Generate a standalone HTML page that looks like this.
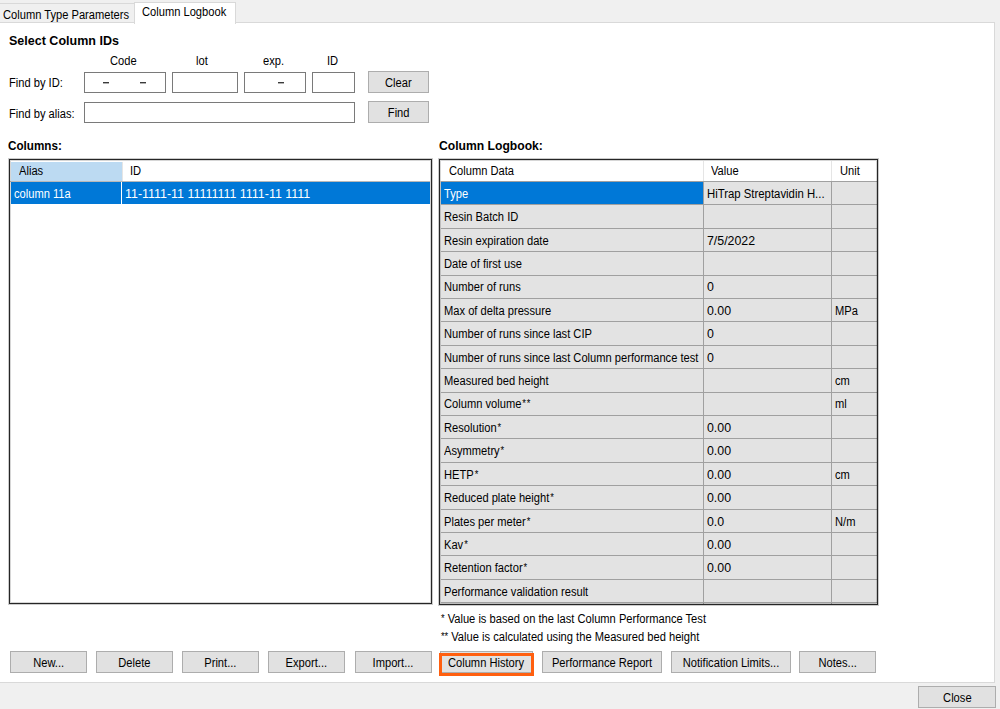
<!DOCTYPE html>
<html><head><meta charset="utf-8">
<style>
*{box-sizing:border-box;margin:0;padding:0}
html,body{width:1000px;height:709px;overflow:hidden;background:#f0f0f0;font-family:"Liberation Sans",sans-serif;font-size:11px;color:#000}
.a{position:absolute}
.t{position:absolute;white-space:nowrap;line-height:12px;font-size:12px;transform-origin:0 0}
.b{position:absolute;white-space:nowrap;line-height:14px;font-size:13px;font-weight:bold;transform-origin:0 0}
.tb{position:absolute;background:#fff;border:1px solid #7a7a7a}
.btn{position:absolute;background:#e1e1e1;border:1px solid #adadad;text-align:center;line-height:12px;padding-top:4.5px;font-size:12px;white-space:nowrap}
.btn span{display:inline-block;transform:scaleX(0.928)}
.w{color:#fff}
.d{letter-spacing:0.7px}
.s{font-size:10px;position:relative;top:-1px;margin-left:1px}
</style></head><body>
<div class="a" style="left:-1px;top:3px;width:136px;height:20px;background:#f0f0f0;border:1px solid #d9d9d9;border-bottom:none"></div>
<div class="t" style="left:3px;top:9px;transform:scaleX(0.928);">Column Type Parameters</div>
<div class="a" style="left:-1px;top:22px;width:996px;height:661px;background:#fff;border:1px solid #d9d9d9"></div>
<div class="a" style="left:134px;top:2px;width:102px;height:22px;background:#fff;border:1px solid #d9d9d9;border-bottom:none"></div>
<div class="t" style="left:142px;top:6px;transform:scaleX(0.928);">Column Logbook</div>
<div class="b" style="left:9px;top:34px;transform:scaleX(0.963)">Select Column IDs</div>
<div class="t" style="left:110px;top:55px;transform:scaleX(0.928);">Code</div>
<div class="t" style="left:196px;top:55px;transform:scaleX(0.928);">lot</div>
<div class="t" style="left:263px;top:55px;transform:scaleX(0.928);">exp.</div>
<div class="t" style="left:327px;top:55px;transform:scaleX(0.928);">ID</div>
<div class="t" style="left:9px;top:77px;transform:scaleX(0.928);">Find by ID:</div>
<div class="t" style="left:9px;top:108px;transform:scaleX(0.928);">Find by alias:</div>
<div class="tb" style="left:84px;top:72px;width:82px;height:21px"></div>
<div class="a" style="left:103px;top:82px;width:6px;height:1px;background:#3a3a3a;box-shadow:0 1px 0 #b0b0b0"></div>
<div class="a" style="left:140px;top:82px;width:6px;height:1px;background:#3a3a3a;box-shadow:0 1px 0 #b0b0b0"></div>
<div class="tb" style="left:172px;top:72px;width:66px;height:21px"></div>
<div class="tb" style="left:244px;top:72px;width:62px;height:21px"></div>
<div class="a" style="left:278px;top:82px;width:6px;height:1px;background:#3a3a3a;box-shadow:0 1px 0 #b0b0b0"></div>
<div class="tb" style="left:312px;top:72px;width:43px;height:21px"></div>
<div class="tb" style="left:84px;top:102px;width:271px;height:21px"></div>
<div class="btn" style="left:368px;top:71px;width:61px;height:22px;"><span>Clear</span></div>
<div class="btn" style="left:368px;top:101px;width:61px;height:22px;"><span>Find</span></div>
<div class="b" style="left:8px;top:139px;transform:scaleX(0.898)">Columns:</div>
<div class="b" style="left:439px;top:139px;transform:scaleX(0.934)">Column Logbook:</div>
<div class="a" style="left:9px;top:159px;width:423px;height:445px;background:#fff"></div>
<div class="a" style="left:11px;top:162px;width:111px;height:19px;background:#bcdaf2"></div>
<div class="a" style="left:122px;top:162px;width:1px;height:19px;background:#e5e5e5"></div>
<div class="a" style="left:10px;top:181px;width:420px;height:1px;background:#b8b8b8"></div>
<div class="t" style="left:19px;top:165px;transform:scaleX(0.928);">Alias</div>
<div class="t" style="left:130px;top:165px;transform:scaleX(0.928);">ID</div>
<div class="a" style="left:11px;top:182px;width:110px;height:22px;background:#0078d7"></div>
<div class="a" style="left:122px;top:182px;width:308px;height:22px;background:#0078d7"></div>
<div class="t w" style="left:14px;top:188px;transform:scaleX(0.928);">column 11a</div>
<div class="t w" style="left:125px;top:188px;transform:scaleX(1.037);">11-1111-11 11111111 1111-11 1111</div>
<div class="a" style="left:439px;top:159px;width:439px;height:446px;background:#fff"></div>
<div class="a" style="left:703px;top:161px;width:1px;height:20px;background:#e5e5e5"></div>
<div class="a" style="left:831px;top:161px;width:1px;height:20px;background:#e5e5e5"></div>
<div class="t" style="left:449px;top:165px;transform:scaleX(0.928);">Column Data</div>
<div class="t" style="left:711px;top:165px;transform:scaleX(0.928);">Value</div>
<div class="t" style="left:840px;top:165px;transform:scaleX(0.928);">Unit</div>
<div class="a" style="left:440px;top:181px;width:437px;height:423px;background:#e3e3e3"></div>
<div class="a" style="left:441px;top:181px;width:436px;height:1px;background:#a0a0a0"></div>
<div class="a" style="left:441px;top:182px;width:262px;height:22px;background:#0078d7"></div>
<div class="a" style="left:441px;top:204px;width:436px;height:1px;background:#a0a0a0"></div>
<div class="t w" style="left:444px;top:188px;transform:scaleX(0.928);">Type</div>
<div class="t" style="left:707px;top:188px;transform:scaleX(0.946);">HiTrap Streptavidin H...</div>
<div class="a" style="left:441px;top:228px;width:436px;height:1px;background:#a0a0a0"></div>
<div class="t" style="left:444px;top:211px;transform:scaleX(0.928);">Resin Batch ID</div>
<div class="a" style="left:441px;top:251px;width:436px;height:1px;background:#a0a0a0"></div>
<div class="t" style="left:444px;top:235px;transform:scaleX(0.928);">Resin expiration date</div>
<div class="t" style="left:707px;top:235px;transform:scaleX(1.03);">7/5/2022</div>
<div class="a" style="left:441px;top:275px;width:436px;height:1px;background:#a0a0a0"></div>
<div class="t" style="left:444px;top:258px;transform:scaleX(0.928);">Date of first use</div>
<div class="a" style="left:441px;top:298px;width:436px;height:1px;background:#a0a0a0"></div>
<div class="t" style="left:444px;top:281px;transform:scaleX(0.928);">Number of runs</div>
<div class="t" style="left:707px;top:281px;transform:scaleX(1.03);">0</div>
<div class="a" style="left:441px;top:321px;width:436px;height:1px;background:#a0a0a0"></div>
<div class="t" style="left:444px;top:305px;transform:scaleX(0.928);">Max of delta pressure</div>
<div class="t" style="left:707px;top:305px;transform:scaleX(1.03);">0.00</div>
<div class="t" style="left:835px;top:305px;transform:scaleX(0.928);">MPa</div>
<div class="a" style="left:441px;top:345px;width:436px;height:1px;background:#a0a0a0"></div>
<div class="t" style="left:444px;top:328px;transform:scaleX(0.928);">Number of runs since last CIP</div>
<div class="t" style="left:707px;top:328px;transform:scaleX(1.03);">0</div>
<div class="a" style="left:441px;top:368px;width:436px;height:1px;background:#a0a0a0"></div>
<div class="t" style="left:444px;top:352px;transform:scaleX(0.928);">Number of runs since last Column performance test</div>
<div class="t" style="left:707px;top:352px;transform:scaleX(1.03);">0</div>
<div class="a" style="left:441px;top:392px;width:436px;height:1px;background:#a0a0a0"></div>
<div class="t" style="left:444px;top:375px;transform:scaleX(0.928);">Measured bed height</div>
<div class="t" style="left:835px;top:375px;transform:scaleX(0.928);">cm</div>
<div class="a" style="left:441px;top:415px;width:436px;height:1px;background:#a0a0a0"></div>
<div class="t" style="left:444px;top:398px;transform:scaleX(0.928);">Column volume<span class="s">*</span><span class="s">*</span></div>
<div class="t" style="left:835px;top:398px;transform:scaleX(0.928);">ml</div>
<div class="a" style="left:441px;top:438px;width:436px;height:1px;background:#a0a0a0"></div>
<div class="t" style="left:444px;top:422px;transform:scaleX(0.928);">Resolution<span class="s">*</span></div>
<div class="t" style="left:707px;top:422px;transform:scaleX(1.03);">0.00</div>
<div class="a" style="left:441px;top:462px;width:436px;height:1px;background:#a0a0a0"></div>
<div class="t" style="left:444px;top:445px;transform:scaleX(0.928);">Asymmetry<span class="s">*</span></div>
<div class="t" style="left:707px;top:445px;transform:scaleX(1.03);">0.00</div>
<div class="a" style="left:441px;top:485px;width:436px;height:1px;background:#a0a0a0"></div>
<div class="t" style="left:444px;top:469px;transform:scaleX(0.928);">HETP<span class="s">*</span></div>
<div class="t" style="left:707px;top:469px;transform:scaleX(1.03);">0.00</div>
<div class="t" style="left:835px;top:469px;transform:scaleX(0.928);">cm</div>
<div class="a" style="left:441px;top:509px;width:436px;height:1px;background:#a0a0a0"></div>
<div class="t" style="left:444px;top:492px;transform:scaleX(0.928);">Reduced plate height<span class="s">*</span></div>
<div class="t" style="left:707px;top:492px;transform:scaleX(1.03);">0.00</div>
<div class="a" style="left:441px;top:532px;width:436px;height:1px;background:#a0a0a0"></div>
<div class="t" style="left:444px;top:516px;transform:scaleX(0.928);">Plates per meter<span class="s">*</span></div>
<div class="t" style="left:707px;top:516px;transform:scaleX(1.03);">0.0</div>
<div class="t" style="left:835px;top:516px;transform:scaleX(0.928);">N/m</div>
<div class="a" style="left:441px;top:555px;width:436px;height:1px;background:#a0a0a0"></div>
<div class="t" style="left:444px;top:539px;transform:scaleX(0.928);">Kav<span class="s">*</span></div>
<div class="t" style="left:707px;top:539px;transform:scaleX(1.03);">0.00</div>
<div class="a" style="left:441px;top:579px;width:436px;height:1px;background:#a0a0a0"></div>
<div class="t" style="left:444px;top:562px;transform:scaleX(0.928);">Retention factor<span class="s">*</span></div>
<div class="t" style="left:707px;top:562px;transform:scaleX(1.03);">0.00</div>
<div class="a" style="left:441px;top:602px;width:436px;height:1px;background:#a0a0a0"></div>
<div class="t" style="left:444px;top:586px;transform:scaleX(0.928);">Performance validation result</div>
<div class="a" style="left:703px;top:182px;width:1px;height:422px;background:#a0a0a0"></div>
<div class="a" style="left:831px;top:182px;width:1px;height:422px;background:#a0a0a0"></div>
<div class="a" style="left:9px;top:159px;width:423px;height:445px;border:1px solid #262626;box-shadow:0 0 0 1px rgba(0,0,0,.2), inset 0 0 0 1px rgba(0,0,0,.16)"></div>
<div class="a" style="left:439px;top:159px;width:439px;height:446px;border:1px solid #262626;box-shadow:0 0 0 1px rgba(0,0,0,.2), inset 0 0 0 1px rgba(0,0,0,.16)"></div>
<div class="t" style="left:440px;top:613px;transform:scaleX(0.928);"><span class="s">*</span> Value is based on the last Column Performance Test</div>
<div class="t" style="left:440px;top:631px;transform:scaleX(0.928);"><span class="s">**</span> Value is calculated using the Measured bed height</div>
<div class="btn" style="left:10px;top:651px;width:77px;height:22px;"><span>New...</span></div>
<div class="btn" style="left:96px;top:651px;width:77px;height:22px;"><span>Delete</span></div>
<div class="btn" style="left:182px;top:651px;width:77px;height:22px;"><span>Print...</span></div>
<div class="btn" style="left:268px;top:651px;width:77px;height:22px;"><span>Export...</span></div>
<div class="btn" style="left:355px;top:651px;width:77px;height:22px;"><span>Import...</span></div>
<div class="btn" style="left:440px;top:651px;width:93px;height:22px;"><span>Column History</span></div>
<div class="btn" style="left:542px;top:651px;width:120px;height:22px;"><span>Performance Report</span></div>
<div class="btn" style="left:671px;top:651px;width:120px;height:22px;"><span>Notification Limits...</span></div>
<div class="btn" style="left:799px;top:651px;width:77px;height:22px;"><span>Notes...</span></div>
<div class="a" style="left:439px;top:653px;width:95px;height:23px;border:3px solid #ff5f0f"></div>
<div class="btn" style="left:918px;top:686px;width:78px;height:22px;"><span>Close</span></div>
</body></html>
